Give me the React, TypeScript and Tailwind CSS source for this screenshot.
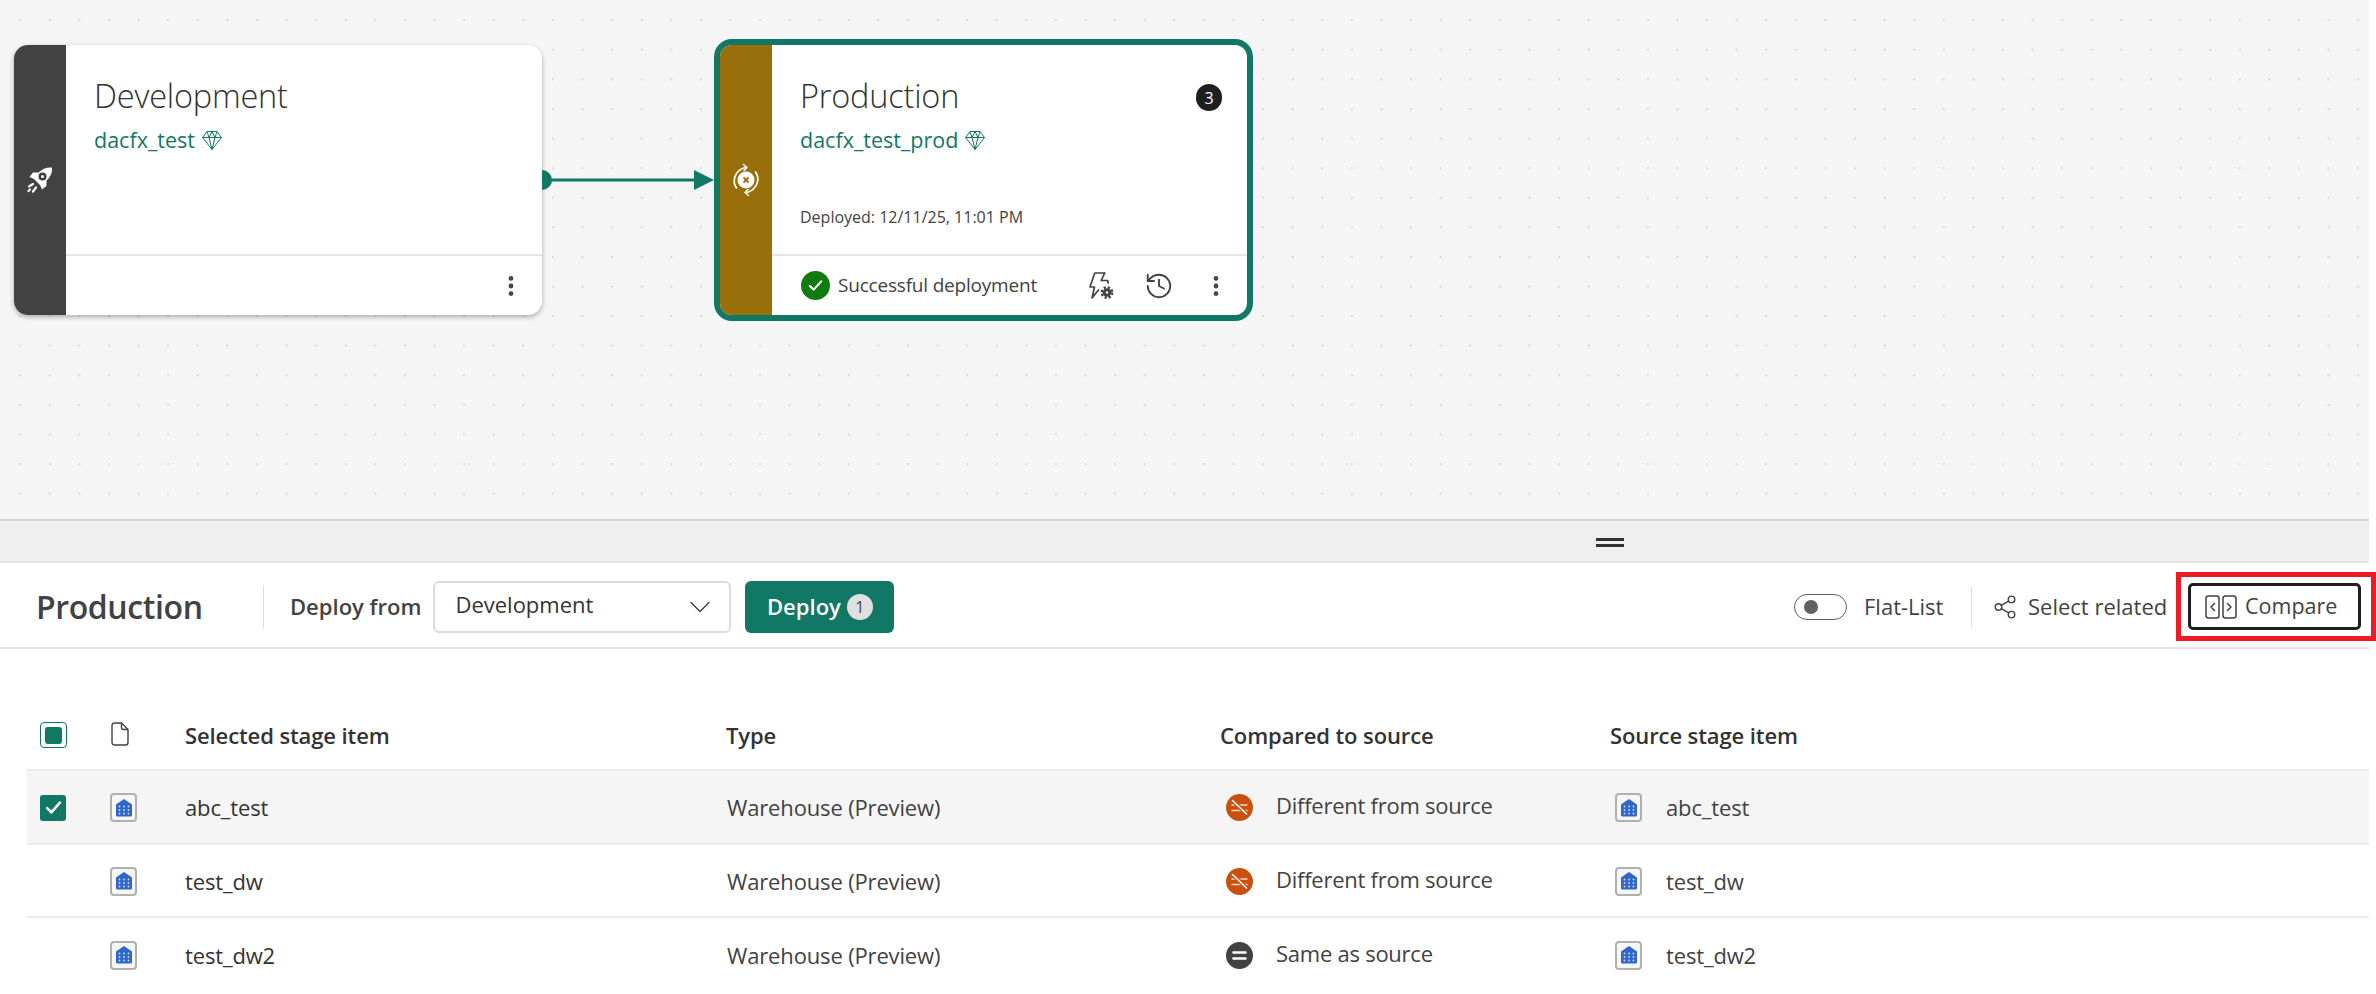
import React, { FC, ReactNode } from 'react'
import { ChevronDown, History, MoreVertical, Share2 } from 'lucide-react'

const FONT = 'font-["Open_Sans","Noto_Sans",sans-serif]'

const Diamond: FC = () => (
  <svg viewBox="0 0 22 22" className="h-[22px] w-[22px] text-[#117865]" fill="none" stroke="currentColor" strokeWidth="1" strokeLinejoin="round">
    <path d="M6 2.500h10l4.500 6L11 20.500 1.500 8.500z" />
    <path d="M1.500 8.500h19M6 2.500l2 6 3 12 3-12 2-6M8 8.500 11 2.500l3 6" />
  </svg>
)

const Rocket: FC = () => (
  <svg viewBox="0 0 40 40" className="h-10 w-10" fill="none">
    <path d="M32 7.500C27 7 22 9 18.500 12.500L13 12.500 9.500 17l4.500 2 6 6 2 4.500 4.500-3.500v-5.500C30.500 17 32.500 12.500 32 7.500z" fill="#fff" />
    <circle cx="22.500" cy="16.500" r="4" fill="#424242" />
    <circle cx="22.500" cy="16.500" r="1.500" fill="#fff" />
    <path d="M13 24l-4 2.500M16 27.500l-3 4M10 29.500 8.500 31" stroke="#fff" strokeWidth="2.200" strokeLinecap="round" />
  </svg>
)

const SyncError: FC = () => (
  <svg viewBox="0 0 40 40" className="h-10 w-10" fill="none">
    <circle cx="20" cy="20" r="8.500" fill="#fff" />
    <path d="M17.500 17.500l5 5M22.500 17.500l-5 5" stroke="#986f0b" strokeWidth="1.800" />
    <path d="M10.500 28C5.500 21 9 10.500 19 7.500M29.500 12C34.500 19 31 29.500 21 32.500" stroke="#fff" strokeWidth="1.700" strokeLinecap="round" />
    <path d="M17.500 4.500 21 7.500 18 10.500M22.500 35.500 19 32.500 22 29.500" stroke="#fff" strokeWidth="1.500" strokeLinecap="round" strokeLinejoin="round" />
  </svg>
)

const Flash: FC = () => (
  <svg viewBox="0 0 26 28" className="h-7 w-[26px]" fill="none">
    <path d="M15.700 1H5.700L1 15h4.500L3 26l6.500-8M15.700 1l-3.500 7.500h6.500l.5 2.500" stroke="#424242" strokeWidth="1.700" strokeLinejoin="round" strokeLinecap="round" />
    <circle cx="18" cy="20.500" r="5.200" fill="none" stroke="#424242" strokeWidth="2.400" strokeDasharray="2.300 1.800" />
    <circle cx="18" cy="20.500" r="4.300" fill="#424242" />
    <circle cx="18" cy="20.500" r="1.200" fill="#fff" />
  </svg>
)

const CheckBadge: FC = () => (
  <svg viewBox="0 0 28 28" className="h-[29px] w-[29px]">
    <circle cx="14" cy="14" r="14" fill="#107c10" />
    <path d="M8.500 14.500l3.800 3.500 7.200-8" fill="none" stroke="#fff" strokeWidth="2" strokeLinecap="round" strokeLinejoin="round" />
  </svg>
)

const Warehouse: FC = () => (
  <div className="flex h-[29px] w-[27px] items-center justify-center rounded-[4px] border-2 border-[#b0b0b0] bg-[#f6f6f6]">
    <svg viewBox="0 0 16 18" className="h-[18px] w-[16px]">
      <path d="M8 0 16 5.500V16a1.500 1.500 0 0 1-1.500 1.500h-13A1.500 1.500 0 0 1 0 16V5.500z" fill="#2f66c8" />
      {[7.5, 11, 14.5].map((y) =>
        [3.5, 8, 12.5].map((x) => <circle key={`${x}-${y}`} cx={x} cy={y} r="0.900" fill="#cfe0fa" />),
      )}
    </svg>
  </div>
)

const DiffBadge: FC = () => (
  <svg viewBox="0 0 27 27" className="h-[27px] w-[27px]">
    <circle cx="13.500" cy="13.500" r="13.500" fill="#ca5010" />
    <path d="M5.500 11h16M5.500 16.500h16" stroke="#f6d8c6" strokeWidth="1.500" />
    <path d="M6.500 6.500l14 13.500" stroke="#ca5010" strokeWidth="4" />
    <path d="M6.500 6.500l14 13.500" stroke="#fff" strokeWidth="1.600" strokeLinecap="round" />
  </svg>
)

const SameBadge: FC = () => (
  <svg viewBox="0 0 27 27" className="h-[27px] w-[27px]">
    <circle cx="13.500" cy="13.500" r="13.500" fill="#424242" />
    <path d="M7.500 10.500h12M7.500 16.500h12" stroke="#fff" strokeWidth="2.600" strokeLinecap="round" />
  </svg>
)

const CompareIcon: FC = () => (
  <svg viewBox="0 0 32 24" className="h-6 w-8" fill="none" stroke="#424242" strokeWidth="1.500">
    <rect x="1" y="1" width="13" height="22" rx="2.500" />
    <rect x="18" y="1" width="13" height="22" rx="2.500" />
    <path d="M9.500 8.500 6 12l3.500 3.500M22.500 8.500 26 12l-3.500 3.500" strokeLinecap="round" strokeLinejoin="round" />
  </svg>
)

const FileIcon: FC = () => (
  <svg viewBox="0 0 18 24" className="h-6 w-[18px]" fill="none" stroke="#424242" strokeWidth="1.400">
    <path d="M3.500 1h7L17 7.500V20.500A2.500 2.500 0 0 1 14.500 23h-11A2.500 2.500 0 0 1 1 20.500v-17A2.500 2.500 0 0 1 3.500 1z" />
    <path d="M10.500 1v4.500a2 2 0 0 0 2 2H17" />
  </svg>
)

type CardProps = {
  left: number
  strip: string
  icon: ReactNode
  title: string
  workspace: string
  children?: ReactNode
  footer: ReactNode
  className: string
}

// cards sit on the free canvas, so they keep their place by offset
const StageCard: FC<CardProps> = ({ left, strip, icon, title, workspace, children, footer, className }) => (
  <div style={{ left }} className={`absolute flex overflow-hidden bg-white ${className}`}>
    <div className={`flex shrink-0 items-center justify-center ${strip}`}>{icon}</div>
    <div className="flex min-w-0 flex-1 flex-col">
      <div className="relative h-[209px] pl-7 pt-[29px] text-[#333]">
        <div className="text-[32.5px] font-light leading-[44px] tracking-[-0.2px]">{title}</div>
        <div className="mt-2 flex items-center gap-[6px] text-[21.5px] leading-7 text-[#117865]">
          <span>{workspace}</span>
          <Diamond />
        </div>
        {children}
      </div>
      <div className="flex h-[61px] items-center border-t-2 border-[#e6e6e6] pl-[29px] pr-[18px]">{footer}</div>
    </div>
  </div>
)

type Row = { name: string; status: 'diff' | 'same'; selected?: boolean }

const rows: Row[] = [
  { name: 'abc_test', status: 'diff', selected: true },
  { name: 'test_dw', status: 'diff' },
  { name: 'test_dw2', status: 'same' },
]

const App: FC = () => {
  return (
    <div className={`relative h-[994px] w-full overflow-hidden bg-white ${FONT}`}>
      <div className="w-[2369px]">
        <div className="relative h-[521px] border-b-2 border-[#d6d6d6] bg-[#f5f5f5] bg-[radial-gradient(#d8d8d8_1px,transparent_1.5px)] bg-[position:5.4px_5.4px] bg-[size:29.6px_29.6px]">
          <div className="absolute left-0 top-[45px] h-[270px] w-full">
            <StageCard
              left={14}
              strip="w-[52px] bg-[#424242]"
              icon={<Rocket />}
              title="Development"
              workspace="dacfx_test"
              className="top-0 h-[270px] w-[528px] rounded-[14px] shadow-[0_2px_5px_rgba(0,0,0,0.3)]"
              footer={
                <MoreVertical className="ml-auto h-[26px] w-[26px] text-[#424242]" strokeWidth={2.4} />
              }
            />
            <StageCard
              left={714}
              strip="w-[52px] bg-[#986f0b]"
              icon={<SyncError />}
              title="Production"
              workspace="dacfx_test_prod"
              className="top-[-6px] h-[282px] w-[539px] rounded-[18px] border-[6px] border-[#117865]"
              footer={
                <>
                  <CheckBadge />
                  <span className="ml-2 text-[19px] tracking-[-0.2px] text-[#424242]">Successful deployment</span>
                  <span className="ml-auto mr-[29px]"><Flash /></span>
                  <History className="mr-[29px] h-[30px] w-[30px] text-[#424242]" strokeWidth={1.5} />
                  <MoreVertical className="h-[26px] w-[26px] text-[#424242]" strokeWidth={2.4} />
                </>
              }
            >
              <span className="absolute right-[25px] top-[39px] flex h-[27px] w-[26px] items-center justify-center rounded-full bg-[#1f1f1f] text-[16px] text-white">
                3
              </span>
              <div className="absolute left-7 top-[160px] text-[16px] leading-6 text-[#424242]">
                Deployed: 12/11/25, 11:01 PM
              </div>
            </StageCard>
            {/* connector between the two stages */}
            <svg className="absolute left-[542px] top-[119px]" width="172" height="32" viewBox="0 0 172 32">
              <path d="M0 6a10 10 0 0 1 0 20z" fill="#117865" />
              <path d="M8 16h146" stroke="#117865" strokeWidth="3" />
              <path d="M152 6l20 10-20 10z" fill="#117865" />
            </svg>
          </div>
        </div>

        <div className="flex h-[42px] items-center justify-center border-b-2 border-[#e3e3e3] bg-[#efefef] pl-[850px] pt-[3px]">
          <div className="h-[9px] w-[28px] border-y-[3px] border-[#333]" />
        </div>

        <div className="flex h-[86px] items-center border-b-2 border-[#e3e3e3] pl-9 pt-[3px]">
          <div className="w-[227px] text-[32px] font-semibold tracking-[-0.4px] text-[#424242]">Production</div>
          <div className="h-11 w-px bg-[#e0e0e0]" />
          <div className="ml-[26px] text-[22px] font-semibold text-[#424242]">Deploy from</div>
          <div className="ml-3 flex h-[52px] w-[298px] items-center justify-between rounded-[6px] border-2 border-[#dcdcdc] pl-5 pr-[11px] text-[22px] text-[#333]">
            <span className="-mt-1">Development</span>
            <ChevronDown className="h-9 w-9 text-[#424242]" strokeWidth={1} />
          </div>
          <div className="ml-[14px] flex h-[52px] w-[149px] items-center justify-center gap-[6px] rounded-[6px] bg-[#117865] text-[22px] font-semibold text-white">
            Deploy
            <span className="flex h-[26px] w-[26px] items-center justify-center rounded-full bg-[#e0e0e0] text-[16px] font-normal text-[#424242]">
              1
            </span>
          </div>
          <div className="ml-auto flex items-center">
            <div className="relative h-[26px] w-[53px] rounded-full border border-[#616161]">
              <div className="absolute left-[9px] top-[5px] h-[14px] w-[14px] rounded-full bg-[#616161]" />
            </div>
            <span className="ml-[17px] w-[107px] text-[22px] text-[#424242]">Flat-List</span>
            <div className="h-[42px] w-px bg-[#e0e0e0]" />
            <Share2 className="ml-5 h-[26px] w-[26px] text-[#424242]" strokeWidth={1.3} />
            <span className="ml-[10px] w-[160px] text-[22px] text-[#424242]">Select related</span>
            <div className="mr-2 flex h-[47px] w-[173px] items-center rounded-[5px] border-[3px] border-[#1f1f1f] pl-[14px] text-[21.5px] text-[#424242]">
              <CompareIcon />
              <span className="ml-2">Compare</span>
            </div>
          </div>
        </div>

        <div className="pl-[27px] text-[22px] text-[#333]">
          <div className="flex h-[122px] items-end border-b-2 border-[#ececec] pb-[17px] font-semibold tracking-[-0.1px]">
            <div className="w-[84px] pb-1 pl-[13px]">
              <div className="flex h-[26px] w-[27px] items-center justify-center rounded-[4px] border border-[#117865]">
                <div className="h-[17px] w-[17px] rounded-[3px] bg-[#117865]" />
              </div>
            </div>
            <div className="w-[74px] pb-1.5"><FileIcon /></div>
            <div className="w-[541px]">Selected stage item</div>
            <div className="w-[494px]">Type</div>
            <div className="w-[390px]">Compared to source</div>
            <div>Source stage item</div>
          </div>
          {rows.map((row, i) => (
            <div
              key={row.name}
              className={`flex items-center pt-px ${row.selected ? 'h-[74px] bg-[#f5f5f5]' : 'h-[73px]'} ${i < rows.length - 1 ? 'border-b-2 border-[#ececec]' : ''}`}
            >
              <div className="w-[84px] pl-[13px]">
                {row.selected && (
                  <div className="flex h-[26px] w-[26px] items-center justify-center rounded-[3px] bg-[#117865]">
                    <svg viewBox="0 0 16 16" className="h-[17px] w-[17px]" fill="none" stroke="#fff" strokeWidth="2.400" strokeLinecap="round" strokeLinejoin="round">
                      <path d="M2 8.500l4 4 8-9" />
                    </svg>
                  </div>
                )}
              </div>
              <div className="-ml-px w-[75px]"><Warehouse /></div>
              <div className="w-[542px] tracking-[-0.15px]">{row.name}</div>
              <div className="w-[499px] tracking-[-0.15px] text-[#424242]">Warehouse (Preview)</div>
              <div className="flex w-[389px] items-center text-[#424242]">
                {row.status === 'diff' ? <DiffBadge /> : <SameBadge />}
                <span className="-mt-1 ml-[23px] tracking-[-0.25px]">
                  {row.status === 'diff' ? 'Different from source' : 'Same as source'}
                </span>
              </div>
              <Warehouse />
              <div className="ml-6 tracking-[-0.15px] text-[#424242]">{row.name}</div>
            </div>
          ))}
        </div>
      </div>

      {/* red annotation box drawn over the screenshot */}
      <div className="pointer-events-none absolute left-[2176px] top-[572px] h-[69px] w-[200px] border-[5px] border-[#ed1c24]" />
    </div>
  )
}

export default App
